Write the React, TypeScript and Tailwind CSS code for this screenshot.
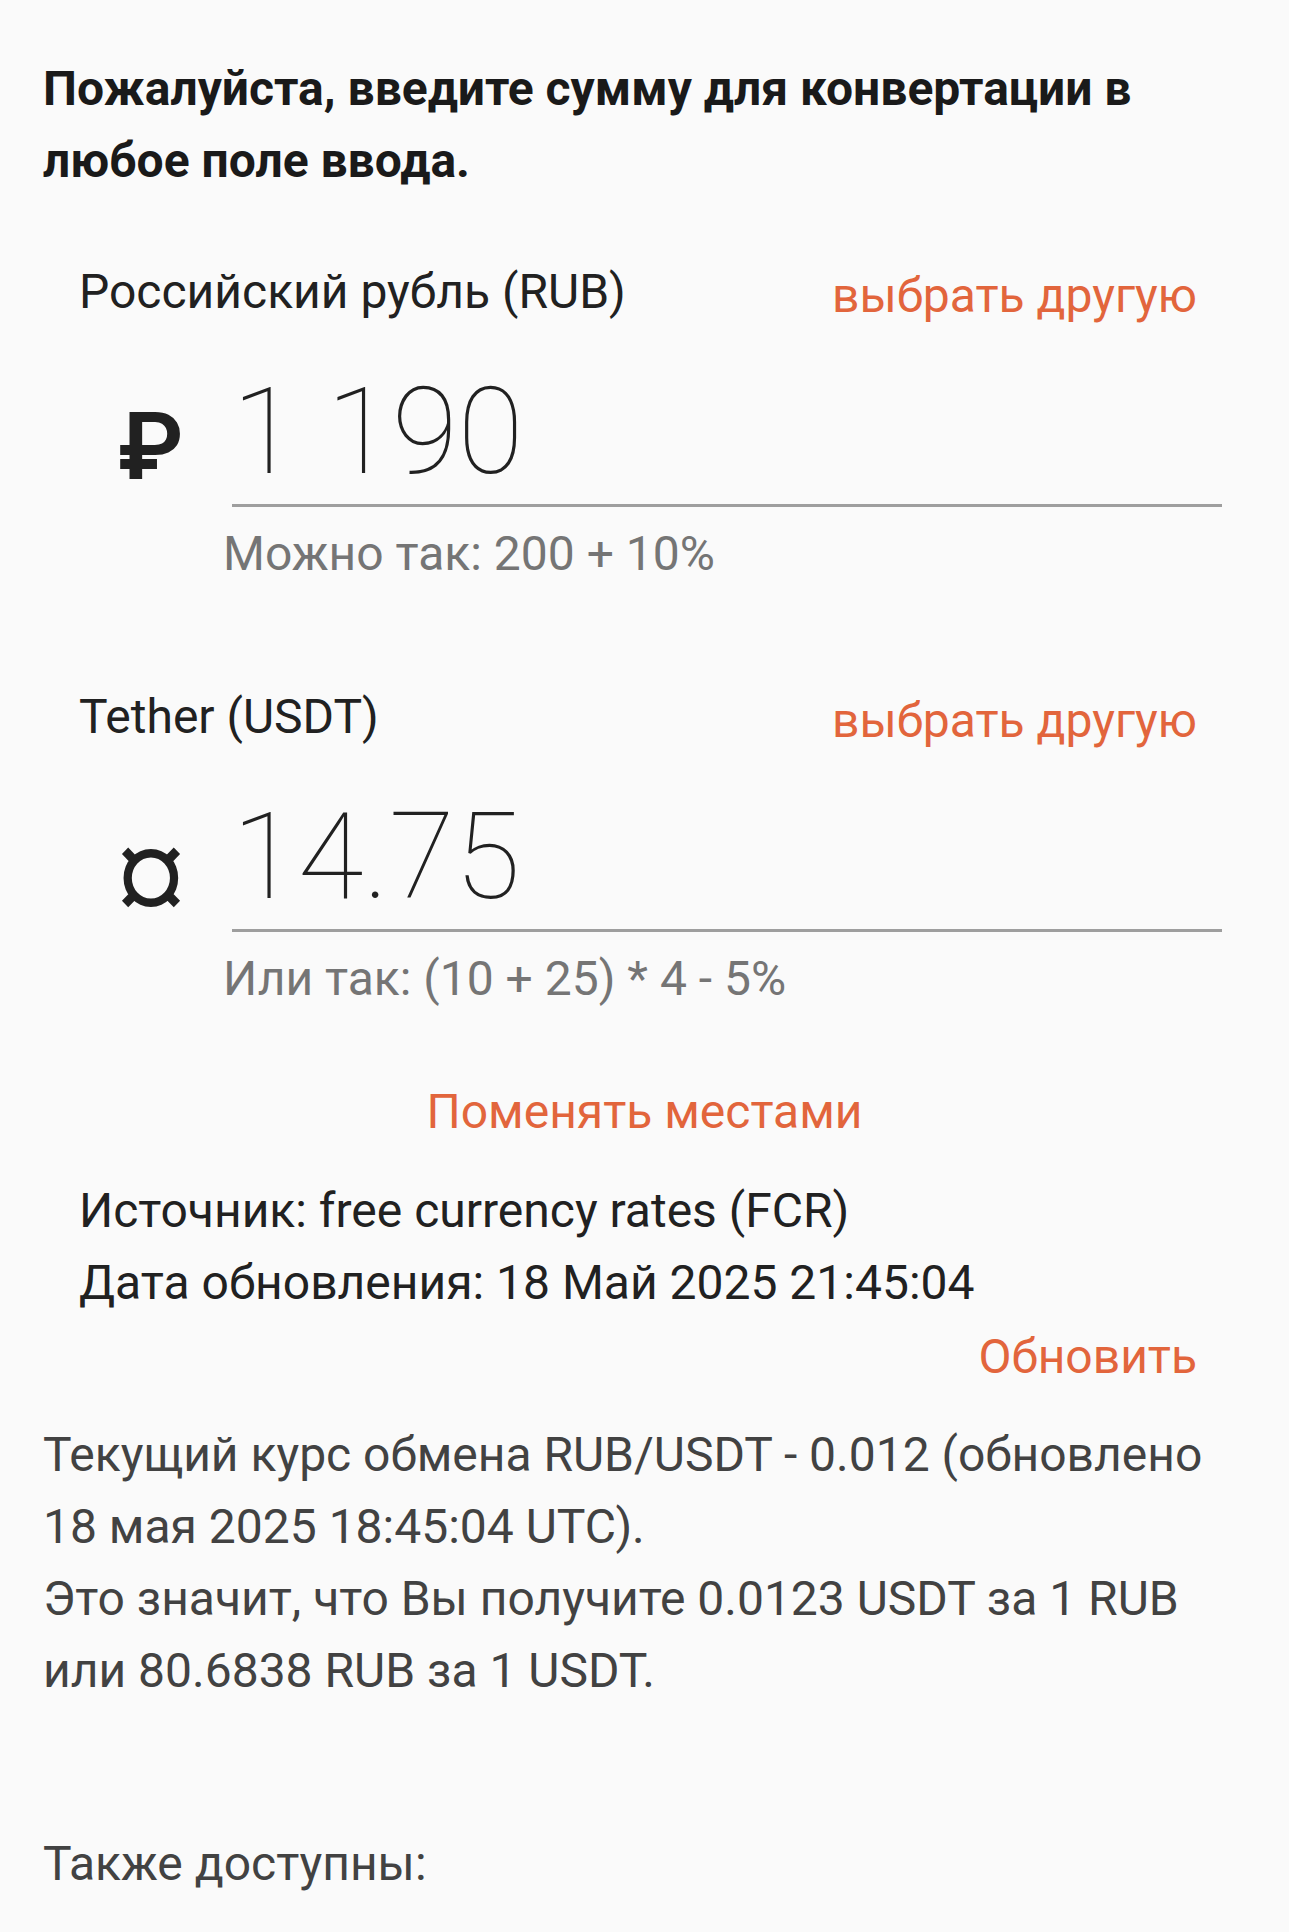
const font = { fontFamily: "Roboto, 'Noto Sans', sans-serif" };

function CurrencyBlock({
  name,
  sign,
  value,
  hint,
  signOffset,
}: {
  name: string;
  sign: string;
  value: string;
  hint: string;
  signOffset: string;
}) {
  return (
    <div>
      <div className="flex items-center justify-between pl-[36px] pr-[49px]">
        <span className="text-[48px] leading-[72px] text-[#212121]">{name}</span>
        <span className="translate-y-[4px] text-[48px] leading-[72px] text-[#e2653c]">выбрать другую</span>
      </div>
      <div className="mt-[34px] flex items-end pl-[75px]">
        <div className={`w-[114px] shrink-0 text-[94px] font-semibold leading-none text-[#212121] ${signOffset}`}>
          {sign}
        </div>
        <div className="mr-[24px] flex-1 border-b-[3px] border-[#9e9e9e] pb-[2px]">
          <div className="text-[120px] font-thin leading-[140px] text-[#212121]">{value}</div>
        </div>
      </div>
      <div className="mt-[11px] pl-[180px] text-[48px] leading-[72px] text-[#757575]">{hint}</div>
    </div>
  );
}

export default function App() {
  return (
    <div className="min-h-[1932px] bg-[#fafafa] px-[43px] pt-[53px]" style={font}>
      <h1 className="text-[48px] font-bold leading-[72px] text-[#1a1a1a]">
        Пожалуйста, введите сумму для конвертации в любое поле ввода.
      </h1>

      <div className="mt-[59px]">
        <CurrencyBlock
          name="Российский рубль (RUB)"
          sign="₽"
          value="1 190"
          hint="Можно так: 200 + 10%"
          signOffset="pb-[13px]"
        />
      </div>
      <div className="mt-[91px]">
        <CurrencyBlock
          name="Tether (USDT)"
          sign="¤"
          value="14.75"
          hint="Или так: (10 + 25) * 4 - 5%"
          signOffset="pb-[11px]"
        />
      </div>

      <div className="mt-[61px] text-center text-[48px] leading-[72px] text-[#e2653c]">Поменять местами</div>

      <div className="mt-[27px] pl-[36px] text-[48px] leading-[72px] text-[#212121]">
        <div>Источник: free currency rates (FCR)</div>
        <div>Дата обновления: 18 Май 2025 21:45:04</div>
      </div>
      <div className="flex justify-end pr-[49px]">
        <span className="translate-y-[2px] text-[48px] leading-[72px] text-[#e2653c]">Обновить</span>
      </div>

      <p className="mt-[28px] text-[48px] leading-[72px] text-[#424242]">
        Текущий курс обмена RUB/USDT - 0.012 (обновлено 18 мая 2025 18:45:04 UTC).
        <br />
        Это значит, что Вы получите 0.0123 USDT за 1 RUB или 80.6838 RUB за 1 USDT.
      </p>

      <p className="mt-[121px] text-[48px] leading-[72px] text-[#424242]">Также доступны:</p>
    </div>
  );
}
